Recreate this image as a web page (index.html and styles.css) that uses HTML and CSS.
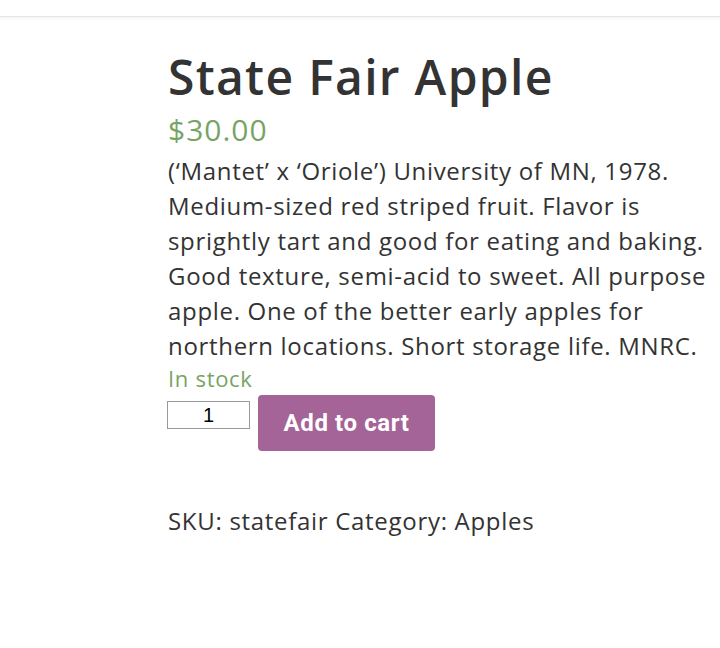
FILE: index.html
```html
<!DOCTYPE html>
<html lang="en">
<head>
    <meta charset="UTF-8">
    <meta name="viewport" content="width=device-width, initial-scale=1.0">
    <link rel="stylesheet" href="styles.css">
</head>
<body>

<header class="site-header"></header>

<main class="product">
    <h1 class="product-title">State Fair Apple</h1>
    <p class="price">$30.00</p>
    <div class="description">
        <p>(&lsquo;Mantet&rsquo; x &lsquo;Oriole&rsquo;) University of MN, 1978. Medium-sized red striped fruit. Flavor is sprightly tart and good for eating and baking. Good texture, semi-acid to sweet. All purpose apple. One of the better early apples for northern locations. Short storage life. MNRC.</p>
    </div>
    <p class="stock">In stock</p>

    <form class="cart">
        <input class="qty" type="number" value="1" min="1">
        <button class="add-to-cart" type="button">Add to cart</button>
    </form>

    <div class="product-meta">
        SKU: statefair Category: Apples
    </div>
</main>

</body>
</html>
```

FILE: styles.css
```css
body {
    margin: 0;
    font-family: "Open Sans", sans-serif;
    color: #333;
    background: #fff;
}

.site-header {
    height: 16px;
    border-bottom: 1px solid #e6e6e6;
    box-shadow: 0 1px 3px rgba(0, 0, 0, 0.06);
}

.product {
    padding: 30px 0 0 168px;
}

.product-title {
    margin: 0;
    font-size: 48px;
    font-weight: 600;
    line-height: 60px;
    letter-spacing: 1.3px;
    color: #333;
}

.price {
    margin: 0 0 3px;
    padding-top: 3px;
    font-size: 30px;
    line-height: 40px;
    letter-spacing: 1px;
    color: #77a464;
}

.description p {
    margin: 0;
    font-size: 24px;
    line-height: 35px;
    letter-spacing: 0.68px;
}

.stock {
    margin: 0;
    font-size: 22px;
    line-height: 30px;
    letter-spacing: 0.7px;
    color: #77a464;
}

.cart {
    display: flex;
    align-items: flex-start;
    gap: 8px;
    margin: 2px 0 0 -1px;
}

.qty {
    width: 77px;
    height: 24px;
    margin-top: 6px;
    padding: 1px 2px;
    border: 1px solid #999;
    font-family: "Liberation Sans", sans-serif;
    font-size: 20px;
    text-align: center;
    -moz-appearance: textfield;
}

.qty::-webkit-inner-spin-button,
.qty::-webkit-outer-spin-button {
    -webkit-appearance: none;
    margin: 0;
}

.add-to-cart {
    width: 177px;
    height: 56px;
    border: none;
    border-radius: 4px;
    background-color: #a46497;
    color: #fff;
    font-family: Roboto, sans-serif;
    font-weight: 700;
    font-size: 24px;
    letter-spacing: 0.6px;
    cursor: pointer;
}

.product-meta {
    margin-top: 52px;
    font-size: 24px;
    line-height: 35px;
    letter-spacing: 0.7px;
}
```
